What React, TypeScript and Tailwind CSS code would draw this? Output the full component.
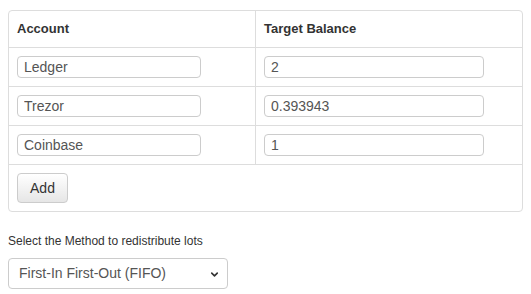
import { ChevronDown } from 'lucide-react';

const ROWS = [
  { account: 'Ledger', balance: '2' },
  { account: 'Trezor', balance: '0.393943' },
  { account: 'Coinbase', balance: '1' },
];

export default function App() {
  return (
    <div className="min-h-screen bg-white pl-2 pt-[10px] text-[#333] font-['Liberation_Sans',Arial,sans-serif]">
      {/* Target balances table */}
      <div className="w-[515px] rounded border border-[#ddd]">
        <div className="grid grid-cols-[247px_266px]">
          <div className="h-[36px] flex items-center pl-2 text-[13px] font-bold border-r border-[#ddd]">Account</div>
          <div className="h-[36px] flex items-center pl-2 text-[13px] font-bold">Target Balance</div>

          {ROWS.map((r) => (
            <div key={r.account} className="contents">
              <div className="h-[39px] flex items-center pl-2 border-t border-r border-[#ddd]">
                <input
                  defaultValue={r.account}
                  className="w-[184px] h-[22px] rounded border border-[#ccc] px-[6px] text-[14px] text-[#555] outline-none font-['Liberation_Sans',Arial,sans-serif]"
                />
              </div>
              <div className="h-[39px] flex items-center pl-2 border-t border-[#ddd]">
                <input
                  defaultValue={r.balance}
                  className="w-[220px] h-[22px] rounded border border-[#ccc] px-[6px] text-[14px] text-[#555] outline-none font-['Liberation_Sans',Arial,sans-serif]"
                />
              </div>
            </div>
          ))}
        </div>
        <div className="h-[47px] flex items-center pl-2 border-t border-[#ddd]">
          <button className="w-[51px] h-[30px] rounded border border-[#ccc] bg-gradient-to-b from-white to-[#e6e6e6] text-[14px] text-[#333]">
            Add
          </button>
        </div>
      </div>

      {/* Redistribution method */}
      <div className="mt-[21px] text-[12px] leading-[17px]">Select the Method to redistribute lots</div>
      <div className="mt-[8px] relative w-[220px] h-[31px] rounded border border-[#ccc] flex items-center pl-[10px] text-[14px] text-[#555]">
        First-In First-Out (FIFO)
        <ChevronDown className="absolute right-[7px] top-[10px] h-[11px] w-[11px] text-[#333]" strokeWidth={3.5} />
      </div>
    </div>
  );
}
